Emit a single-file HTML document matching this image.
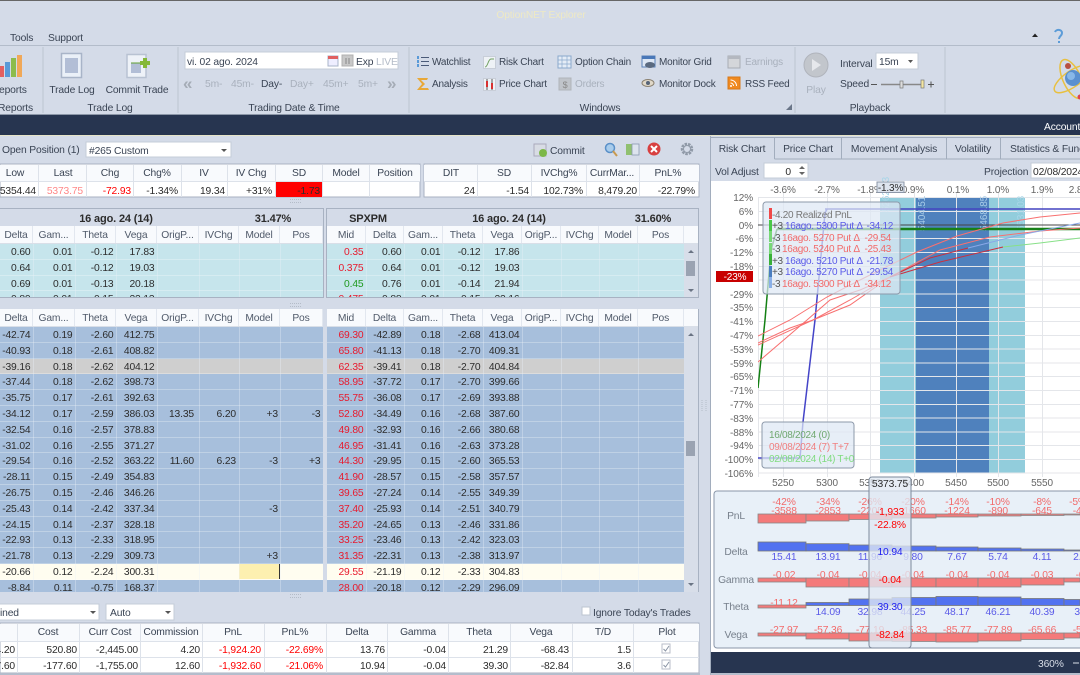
<!DOCTYPE html>
<html><head><meta charset="utf-8"><title>OptionNET Explorer</title>
<style>
html,body{margin:0;padding:0;width:1080px;height:675px;overflow:hidden;background:#d4dbe8}
body{position:relative;font:10.3px "Liberation Sans",sans-serif;letter-spacing:-.15px;color:#2c2c2c;filter:blur(.25px)}
.p{position:absolute;overflow:hidden}
.L .r{grid-template-columns:33px 42px 41px 41px 42px 40px 41px 43px}
.R .r{grid-template-columns:39px 38px 39px 40px 39px 39px 38px 39px 46px}
.r{display:grid;height:15.8px;box-sizing:border-box;border-bottom:1px solid rgba(255,255,255,.28);line-height:15px}
.r i{padding-top:1px;box-sizing:border-box}
.h{height:18px;background:#f8fafd;line-height:17px;border-bottom:1px solid #d9dfe8;color:#505a6a}
.h i{text-align:center;padding:1px 0 0;border-right:1px solid #e2e7ef}
i{font-style:normal;display:block;text-align:right;padding-right:2.5px;white-space:nowrap;overflow:hidden}
.a{background:#c6e5ec}.b{background:#a7bfdc}.g{background:#cfcfcf}.y{background:#fffdf0}
.s{color:#e8192c}.n{color:#1f9a1f}.o{background:#fdf0b0}
svg{position:absolute;left:0;top:0}
svg text{font:10.3px "Liberation Sans",sans-serif;letter-spacing:-.15px;fill:#3a4454}
.m{text-anchor:middle}.e{text-anchor:end}
.w{fill:#fff!important}.x{fill:#a9b1bd!important}.k{fill:#2c2c2c!important}
.d{fill:#f00!important}.q{fill:#ff8888!important}.u{fill:#5a5ae8!important}.t{fill:#f26a6a!important}
.ax text{fill:#666!important;font-size:10px!important;letter-spacing:-.1px}
.z text{font-size:10px;letter-spacing:-.2px}
.lg text{font-size:10px;letter-spacing:-.3px}
</style></head><body>

<!-- top grid left -->
<div class="p" style="left:0;top:208px;width:324px;height:90px;background:#d4dbe8;border-right:1px solid #a8b2c2;border-top:1px solid #a8b2c2;border-bottom:1px solid #a8b2c2;box-sizing:border-box"></div>
<div class="p L" style="left:0;top:226px;width:323px;height:71px">
<div class="r h"><i>Delta</i><i>Gam...</i><i>Theta</i><i>Vega</i><i>OrigP...</i><i>IVChg</i><i>Model</i><i>Pos</i></div>
<div class="r a"><i>0.60</i><i>0.01</i><i>-0.12</i><i>17.83</i></div>
<div class="r a"><i>0.64</i><i>0.01</i><i>-0.12</i><i>19.03</i></div>
<div class="r a"><i>0.69</i><i>0.01</i><i>-0.13</i><i>20.18</i></div>
<div class="r a"><i>0.80</i><i>0.01</i><i>-0.15</i><i>22.13</i></div>
</div>
<!-- top grid right -->
<div class="p" style="left:326px;top:208px;width:373px;height:90px;border:1px solid #a8b2c2;box-sizing:border-box;background:#d4dbe8"></div>
<div class="p R" style="left:327px;top:226px;width:371px;height:71px;background:#d8dee9">
<div class="r h"><i>Mid</i><i>Delta</i><i>Gam...</i><i>Theta</i><i>Vega</i><i>OrigP...</i><i>IVChg</i><i>Model</i><i>Pos</i></div>
<div style="width:357px">
<div class="r a"><i class="s">0.35</i><i>0.60</i><i>0.01</i><i>-0.12</i><i>17.86</i></div>
<div class="r a"><i class="s">0.375</i><i>0.64</i><i>0.01</i><i>-0.12</i><i>19.03</i></div>
<div class="r a"><i class="n">0.45</i><i>0.76</i><i>0.01</i><i>-0.14</i><i>21.94</i></div>
<div class="r a"><i class="s">0.475</i><i>0.88</i><i>0.01</i><i>-0.15</i><i>22.16</i></div>
</div></div>

<!-- main grid left -->
<div class="p L" style="left:0;top:309px;width:323px;height:283px;background:#a7bfdc">
<div class="r h"><i>Delta</i><i>Gam...</i><i>Theta</i><i>Vega</i><i>OrigP...</i><i>IVChg</i><i>Model</i><i>Pos</i></div>
<div class="r b"><i>-42.74</i><i>0.19</i><i>-2.60</i><i>412.75</i></div>
<div class="r b"><i>-40.93</i><i>0.18</i><i>-2.61</i><i>408.82</i></div>
<div class="r g"><i>-39.16</i><i>0.18</i><i>-2.62</i><i>404.12</i></div>
<div class="r b"><i>-37.44</i><i>0.18</i><i>-2.62</i><i>398.73</i></div>
<div class="r b"><i>-35.75</i><i>0.17</i><i>-2.61</i><i>392.63</i></div>
<div class="r b"><i>-34.12</i><i>0.17</i><i>-2.59</i><i>386.03</i><i style="padding-right:5px">13.35</i><i style="padding-right:3px">6.20</i><i style="padding-right:2px">+3</i><i>-3</i></div>
<div class="r b"><i>-32.54</i><i>0.16</i><i>-2.57</i><i>378.83</i></div>
<div class="r b"><i>-31.02</i><i>0.16</i><i>-2.55</i><i>371.27</i></div>
<div class="r b"><i>-29.54</i><i>0.16</i><i>-2.52</i><i>363.22</i><i style="padding-right:5px">11.60</i><i style="padding-right:3px">6.23</i><i style="padding-right:2px">-3</i><i>+3</i></div>
<div class="r b"><i>-28.11</i><i>0.15</i><i>-2.49</i><i>354.83</i></div>
<div class="r b"><i>-26.75</i><i>0.15</i><i>-2.46</i><i>346.26</i></div>
<div class="r b"><i>-25.43</i><i>0.14</i><i>-2.42</i><i>337.34</i><i></i><i></i><i style="padding-right:2px">-3</i></div>
<div class="r b"><i>-24.15</i><i>0.14</i><i>-2.37</i><i>328.18</i></div>
<div class="r b"><i>-22.93</i><i>0.13</i><i>-2.33</i><i>318.95</i></div>
<div class="r b"><i>-21.78</i><i>0.13</i><i>-2.29</i><i>309.73</i><i></i><i></i><i style="padding-right:2px">+3</i></div>
<div class="r y"><i>-20.66</i><i>0.12</i><i>-2.24</i><i>300.31</i><i></i><i></i><i class="o" style="border-right:1px solid #333">&nbsp;</i></div>
<div class="r b"><i>-8.84</i><i>0.11</i><i>-0.75</i><i>168.37</i></div>
</div>
<!-- main grid right -->
<div class="p R" style="left:327px;top:309px;width:371px;height:283px;background:#d8dee9">
<div class="r h"><i>Mid</i><i>Delta</i><i>Gam...</i><i>Theta</i><i>Vega</i><i>OrigP...</i><i>IVChg</i><i>Model</i><i>Pos</i></div>
<div style="width:357px">
<div class="r b"><i class="s">69.30</i><i>-42.89</i><i>0.18</i><i>-2.68</i><i>413.04</i></div>
<div class="r b"><i class="s">65.80</i><i>-41.13</i><i>0.18</i><i>-2.70</i><i>409.31</i></div>
<div class="r g"><i class="s">62.35</i><i>-39.41</i><i>0.18</i><i>-2.70</i><i>404.84</i></div>
<div class="r b"><i class="s">58.95</i><i>-37.72</i><i>0.17</i><i>-2.70</i><i>399.66</i></div>
<div class="r b"><i class="s">55.75</i><i>-36.08</i><i>0.17</i><i>-2.69</i><i>393.88</i></div>
<div class="r b"><i class="s">52.80</i><i>-34.49</i><i>0.16</i><i>-2.68</i><i>387.60</i></div>
<div class="r b"><i class="s">49.80</i><i>-32.93</i><i>0.16</i><i>-2.66</i><i>380.68</i></div>
<div class="r b"><i class="s">46.95</i><i>-31.41</i><i>0.16</i><i>-2.63</i><i>373.28</i></div>
<div class="r b"><i class="s">44.30</i><i>-29.95</i><i>0.15</i><i>-2.60</i><i>365.53</i></div>
<div class="r b"><i class="s">41.90</i><i>-28.57</i><i>0.15</i><i>-2.58</i><i>357.57</i></div>
<div class="r b"><i class="s">39.65</i><i>-27.24</i><i>0.14</i><i>-2.55</i><i>349.39</i></div>
<div class="r b"><i class="s">37.40</i><i>-25.93</i><i>0.14</i><i>-2.51</i><i>340.79</i></div>
<div class="r b"><i class="s">35.20</i><i>-24.65</i><i>0.13</i><i>-2.46</i><i>331.86</i></div>
<div class="r b"><i class="s">33.25</i><i>-23.46</i><i>0.13</i><i>-2.42</i><i>323.03</i></div>
<div class="r b"><i class="s">31.35</i><i>-22.31</i><i>0.13</i><i>-2.38</i><i>313.97</i></div>
<div class="r y"><i class="s">29.55</i><i>-21.19</i><i>0.12</i><i>-2.33</i><i>304.83</i></div>
<div class="r b"><i class="s">28.00</i><i>-20.18</i><i>0.12</i><i>-2.29</i><i>296.09</i></div>
</div></div>

<svg width="1080" height="675" viewBox="0 0 1080 675" xmlns="http://www.w3.org/2000/svg">
<defs><clipPath id="plot"><rect x="758" y="197" width="322" height="276"/></clipPath></defs>
<rect x="0" y="0" width="1080" height="1" fill="#666"/>

<!-- grid vertical lines -->
<g stroke="rgba(235,242,250,.35)" stroke-width="1">
<path d="M33.5 244V297M75.5 244V297M116.5 244V297M157.5 244V297M199.5 244V297M239.5 244V297M280.5 244V297"/>
<path d="M33.5 327V592M75.5 327V592M116.5 327V592M157.5 327V592M199.5 327V592M239.5 327V592M280.5 327V592"/>
<path d="M366.5 244V297M404.5 244V297M443.5 244V297M483.5 244V297M522.5 244V297M561.5 244V297M599.5 244V297M638.5 244V297"/>
<path d="M366.5 327V592M404.5 327V592M443.5 327V592M483.5 327V592M522.5 327V592M561.5 327V592M599.5 327V592M638.5 327V592"/>
</g>
<rect x="323" y="309" width="3" height="283" fill="#d4dbe8"/>
<rect x="698" y="309" width="1" height="283" fill="#a8b2c2"/>

<!-- title + menu -->
<text x="541" y="18" class="m" style="fill:#eee9c4">OptionNET Explorer</text>
<text x="10" y="41">Tools</text><text x="48" y="41">Support</text>
<path d="M1032 37l3-3.500 3 3.500z" fill="#222"/>
<path d="M1055 32c1-3 7-3 7 1 0 3-3 3-3 6M1059 41v2" fill="none" stroke="#5c9cd8" stroke-width="2"/>
<!-- ribbon -->
<rect x="0" y="45" width="1080" height="1" fill="#b3bcca"/>
<path d="M43 47V113M178 47V113M409 47V113M795 47V113M945 47V113" stroke="#bcc4d0"/>
<rect x="0" y="115" width="1080" height="20" fill="#273550"/>
<rect x="0" y="135" width="1080" height="1" fill="#e6e4c8"/>
<rect x="0" y="114" width="1080" height="1" fill="#8c97a8"/>

<!-- reports -->
<rect x="0" y="66" width="4" height="11" fill="#e46060"/><rect x="5" y="62" width="5" height="15" fill="#5a9ad8"/>
<rect x="11" y="58" width="5" height="19" fill="#8cbc4c"/><rect x="17" y="55" width="5" height="22" fill="#f0a858"/>
<text x="-1" y="93">eports</text><text x="-2" y="111">Reports</text>
<!-- trade log -->
<rect x="61.500" y="53.500" width="20" height="24" fill="#eaf0f8" stroke="#a8b4c8" stroke-width="1.500"/>
<rect x="65" y="58" width="13" height="15" fill="#b2bed6"/>
<text x="72" y="93" class="m">Trade Log</text>
<rect x="127" y="54.500" width="19" height="23" fill="#eef2f8" stroke="#b8c2d2" stroke-width="1.500"/>
<rect x="131" y="63" width="10" height="10" fill="#b2bed6"/><path d="M131 63H146" stroke="#60a030"/>
<path d="M145 58v10M140 63h10" stroke="#84b838" stroke-width="4"/>
<text x="137" y="93" class="m">Commit Trade</text>
<text x="110" y="111" class="m">Trade Log</text>
<!-- date -->
<rect x="185" y="52" width="213" height="17" fill="#fff" stroke="#c4ccd8"/>
<text x="187" y="65">vi. 02 ago. 2024</text>
<rect x="328" y="56" width="10" height="10" fill="#eef" stroke="#a8b4c8"/><rect x="328" y="56" width="10" height="3" fill="#e06060"/>
<rect x="342" y="55" width="11" height="11" fill="#c8c8c8" stroke="#b0b0b0"/><path d="M346 58v6M349 58v6" stroke="#888"/>
<text x="356" y="65">Exp</text><text x="376" y="65" style="fill:#b4bcc8">LIVE</text>
<text x="183" y="89" style="font-size:17px;font-weight:bold;fill:#a5acb6">«</text>
<text x="387" y="89" style="font-size:17px;font-weight:bold;fill:#a5acb6">»</text>
<text x="205" y="87" class="x">5m-</text><text x="231" y="87" class="x">45m-</text><text x="261" y="87">Day-</text><text x="290" y="87" class="x">Day+</text><text x="323" y="87" class="x">45m+</text><text x="358" y="87" class="x">5m+</text>
<text x="294" y="111" class="m">Trading Date &amp; Time</text>
<!-- windows icons -->
<g fill="none" stroke="#4a5a78"><path d="M421 57.500h8M421 61.500h8M421 65.500h8"/></g>
<path d="M417 56h2v3h-2zM417 60h2v3h-2zM417 64h2v3h-2z" fill="#5a9ad8"/>
<path d="M417 78h11l-1 2h-6l4 4-4 4h7l1 2h-12l5-6z" fill="#e8a838"/>
<rect x="483.500" y="56.500" width="12" height="12" fill="#eef2f6" stroke="#c8ced8"/><path d="M485 67c3 0 3-8 6-8h3" fill="none" stroke="#70a060"/>
<rect x="483.500" y="78.500" width="12" height="12" fill="#eef2f6" stroke="#c8ced8"/><path d="M487 79v11M492 79v11" stroke="#555"/><rect x="486" y="81" width="2" height="6" fill="#d83030"/><rect x="491" y="83" width="2" height="6" fill="#d83030"/>
<rect x="558" y="56" width="13" height="12" fill="#e4ecf6" stroke="#8aa8cc"/><path d="M558 60h13M558 64h13M562 56v12M567 56v12" stroke="#8aa8cc" stroke-width=".7"/>
<rect x="559" y="78" width="12" height="12" fill="#c0c4ca" stroke="#b0b4ba"/><text x="565" y="88" class="m" style="font-size:9px;fill:#888!important">$</text>
<rect x="642" y="56" width="13" height="11" fill="#dce6f4" stroke="#5a82b8"/><rect x="642" y="56" width="13" height="3" fill="#4a78b8"/>
<ellipse cx="650" cy="65" rx="5" ry="3" fill="#5a6a80"/>
<ellipse cx="648" cy="83" rx="6" ry="3.500" fill="#e0d8c8" stroke="#8a8070"/><circle cx="648" cy="83" r="2" fill="#566478"/>
<rect x="728" y="56" width="12" height="12" fill="#d4d6da" stroke="#a8acb4"/><rect x="728" y="56" width="12" height="3" fill="#b4b8c0"/>
<rect x="728" y="77" width="12" height="12" fill="#f08a20" stroke="#d87818"/><path d="M730.500 80a6 6 0 0 1 6 6M730.500 83a3 3 0 0 1 3 3" stroke="#fff" fill="none"/><circle cx="731" cy="86" r="1" fill="#fff"/>
<g class="z">
<text x="432" y="65">Watchlist</text><text x="499" y="65">Risk Chart</text><text x="575" y="65">Option Chain</text><text x="659" y="65">Monitor Grid</text><text x="745" y="65" class="x">Earnings</text>
<text x="432" y="87">Analysis</text><text x="499" y="87">Price Chart</text><text x="575" y="87" class="x">Orders</text><text x="659" y="87">Monitor Dock</text><text x="745" y="87">RSS Feed</text>
</g>
<text x="600" y="111" class="m">Windows</text>
<path d="M786 110h6v-6z" fill="#6a7688"/>
<!-- playback -->
<circle cx="816" cy="65" r="12" fill="#c2c6cc" stroke="#b0b4bc"/><path d="M812 59l9 6-9 6z" fill="#e6e8ec"/>
<text x="816" y="93" class="m x">Play</text>
<text x="840" y="67">Interval</text>
<rect x="876" y="53" width="42" height="16" fill="#fff" stroke="#c4ccd8"/><text x="879" y="65">15m</text><path d="M908 60h5l-2.500 3z" fill="#555"/>
<text x="840" y="87">Speed</text>
<path d="M871 84.500h6" stroke="#555"/><path d="M881 84.500h43" stroke="#888" stroke-width="1.500"/><rect x="900" y="81" width="3" height="7" fill="#ddd" stroke="#777" stroke-width=".7"/><rect x="921" y="80" width="3" height="8" fill="#f4e6a0" stroke="#777" stroke-width=".7"/><path d="M928 84.500h6M931 81.500v6" stroke="#555"/>
<text x="870" y="111" class="m">Playback</text>
<!-- atom -->
<ellipse cx="1072" cy="79" rx="9" ry="21" fill="none" stroke="#e8c040" stroke-width="1.500" transform="rotate(-25 1072 79)"/>
<ellipse cx="1072" cy="79" rx="21" ry="8" fill="none" stroke="#e8c040" stroke-width="1.500" transform="rotate(-35 1072 79)"/>
<circle cx="1073" cy="78" r="8" fill="#5a90d0"/><circle cx="1071" cy="76" r="4" fill="#88b8e8"/>
<circle cx="1068" cy="66" r="3" fill="#b85040"/><circle cx="1080" cy="97" r="2.500" fill="#e04050"/>
<text x="1044" y="130" class="w">Account</text>

<!-- open position row -->
<text x="2" y="153">Open Position (1)</text>
<rect x="86" y="142" width="145" height="15" fill="#fff" stroke="#c4ccd8"/><text x="89" y="154">#265 Custom</text><path d="M221 149h6l-3 3z" fill="#555"/>
<rect x="534" y="144" width="12" height="12" fill="#d8dce4" stroke="#aab"/><circle cx="543" cy="153" r="4" fill="#7cb848"/>
<text x="550" y="154">Commit</text>
<circle cx="610" cy="148" r="4.500" fill="#a8ccec" stroke="#5a90c8" stroke-width="1.500"/><path d="M613 151l4 5" stroke="#c89a50" stroke-width="2"/>
<rect x="626" y="144" width="6" height="11" fill="#90c070"/><rect x="632" y="144" width="7" height="11" fill="#dde4ee" stroke="#8a9ab0" stroke-width=".8"/>
<circle cx="654" cy="149" r="6.500" fill="#d84040"/><path d="M651 146l6 6M657 146l-6 6" stroke="#fff" stroke-width="2"/>
<circle cx="687" cy="149" r="5" fill="none" stroke="#909aa8" stroke-width="2.500" stroke-dasharray="2.500 1"/><circle cx="687" cy="149" r="3.500" fill="none" stroke="#909aa8"/>

<!-- info tables -->
<rect x="0" y="164" width="420" height="33" fill="#fff" stroke="#a8b2c2"/>
<rect x="424" y="164" width="275" height="33" fill="#fff" stroke="#a8b2c2"/>
<rect x="0" y="165" width="420" height="16" fill="#f8fafd"/><rect x="424" y="165" width="275" height="16" fill="#f8fafd"/>
<rect x="275" y="182" width="47" height="15" fill="#f00"/>
<path d="M38.500 165V197M86.500 165V197M133.500 165V197M181.500 165V197M227.500 165V197M275.500 165V197M322.500 165V197M369.500 165V197M477.500 165V197M531.500 165V197M586.500 165V197M639.500 165V197M0 181.500H420M424 181.500H699" stroke="#dde2ea"/>
<text x="15" y="176" class="m">Low</text><text x="63" y="176" class="m">Last</text><text x="110" y="176" class="m">Chg</text><text x="157" y="176" class="m">Chg%</text><text x="204" y="176" class="m">IV</text><text x="251" y="176" class="m">IV Chg</text><text x="299" y="176" class="m">SD</text><text x="346" y="176" class="m">Model</text><text x="395" y="176" class="m">Position</text>
<text x="451" y="176" class="m">DIT</text><text x="504" y="176" class="m">SD</text><text x="559" y="176" class="m">IVChg%</text><text x="612" y="176" class="m">CurrMar...</text><text x="668" y="176" class="m">PnL%</text>
<text x="36" y="194" class="e k">5354.44</text><text x="83" y="194" class="e q">5373.75</text><text x="131" y="194" class="e d">-72.93</text><text x="178" y="194" class="e k">-1.34%</text><text x="225" y="194" class="e k">19.34</text><text x="272" y="194" class="e k">+31%</text><text x="320" y="194" class="e k">-1.73</text>
<text x="475" y="194" class="e k">24</text><text x="529" y="194" class="e k">-1.54</text><text x="583" y="194" class="e k">102.73%</text><text x="637" y="194" class="e k">8,479.20</text><text x="695" y="194" class="e k">-22.79%</text>

<!-- grid titles -->
<text x="116" y="222" class="m k" style="font-weight:bold;font-size:11px">16 ago. 24 (14)</text><text x="273" y="222" class="m k" style="font-weight:bold;font-size:11px">31.47%</text>
<text x="368" y="222" class="m k" style="font-weight:bold;font-size:11px">SPXPM</text><text x="509" y="222" class="m k" style="font-weight:bold;font-size:11px">16 ago. 24 (14)</text><text x="653" y="222" class="m k" style="font-weight:bold;font-size:11px">31.60%</text>
<!-- scrollbars -->
<rect x="686" y="261" width="9" height="15" fill="#9aa3b2"/><path d="M688 253h6l-3-3zM688 289h6l-3 3z" fill="#6a7484"/>
<rect x="686" y="441" width="9" height="15" fill="#9aa3b2"/><path d="M688 336h6l-3-3zM688 583h6l-3 3z" fill="#6a7484"/>
<!-- splitters -->
<g stroke="#b4bcc8" stroke-dasharray="1 1"><path d="M290 202.500h12M290 303.500h12M290 597.500h12M290 199.500h12M290 306.500h12M290 594.500h12"/><path d="M702 400v12M706 400v12"/></g>

<!-- bottom controls -->
<rect x="-2" y="604" width="101" height="16" fill="#fff" stroke="#c4ccd8"/><text x="0" y="616">ined</text><path d="M90 611h6l-3 3z" fill="#555"/>
<rect x="106" y="604" width="68" height="16" fill="#fff" stroke="#c4ccd8"/><text x="110" y="616">Auto</text><path d="M165 611h6l-3 3z" fill="#555"/>
<rect x="582" y="607" width="8" height="8" fill="#fff" stroke="#bcc4d0"/><text x="593" y="616">Ignore Today's Trades</text>
<!-- position table -->
<rect x="0" y="623" width="699" height="50" fill="#fff" stroke="#a8b2c2"/><rect x="0" y="624" width="699" height="17" fill="#f8fafd"/>
<path d="M17.500 624V673M79.500 624V673M140.500 624V673M202.500 624V673M264.500 624V673M326.500 624V673M387.500 624V673M448.500 624V673M510.500 624V673M572.500 624V673M633.500 624V673M0 641.500H699M0 657.500H699" stroke="#dde2ea"/>
<text x="48" y="635" class="m">Cost</text><text x="110" y="635" class="m">Curr Cost</text><text x="171" y="635" class="m">Commission</text><text x="233" y="635" class="m">PnL</text><text x="295" y="635" class="m">PnL%</text><text x="357" y="635" class="m">Delta</text><text x="418" y="635" class="m">Gamma</text><text x="479" y="635" class="m">Theta</text><text x="541" y="635" class="m">Vega</text><text x="603" y="635" class="m">T/D</text><text x="667" y="635" class="m">Plot</text>
<text x="15" y="653" class="e k">4.20</text><text x="77" y="653" class="e k">520.80</text><text x="138" y="653" class="e k">-2,445.00</text><text x="200" y="653" class="e k">4.20</text><text x="261" y="653" class="e d">-1,924.20</text><text x="323" y="653" class="e d">-22.69%</text><text x="385" y="653" class="e k">13.76</text><text x="446" y="653" class="e k">-0.04</text><text x="508" y="653" class="e k">21.29</text><text x="569" y="653" class="e k">-68.43</text><text x="631" y="653" class="e k">1.5</text>
<text x="15" y="669" class="e k">7.60</text><text x="77" y="669" class="e k">-177.60</text><text x="138" y="669" class="e k">-1,755.00</text><text x="200" y="669" class="e k">12.60</text><text x="261" y="669" class="e d">-1,932.60</text><text x="323" y="669" class="e d">-21.06%</text><text x="385" y="669" class="e k">10.94</text><text x="446" y="669" class="e k">-0.04</text><text x="508" y="669" class="e k">39.30</text><text x="569" y="669" class="e k">-82.84</text><text x="631" y="669" class="e k">3.6</text>
<g fill="#fff" stroke="#b8bec8"><rect x="662" y="644" width="8" height="9"/><rect x="662" y="660" width="8" height="9"/></g>
<path d="M663.500 649l2 2 3.500-5M663.500 665l2 2 3.500-5" fill="none" stroke="#8a94a4"/>
<rect x="0" y="673" width="700" height="2" fill="#b4bdcc"/>

<!-- right tabs -->
<path d="M710.500 159V137.500H774.500V159M841.500 159V137.500M946.500 159V137.500M1000.500 159V137.500H1080M774.500 137.500H1000M710.500 136V675" fill="none" stroke="#a2adbd"/>
<path d="M774.500 159H1080" stroke="#a2adbd"/>
<text x="742" y="152" class="m">Risk Chart</text><text x="808" y="152" class="m">Price Chart</text><text x="894" y="152" class="m">Movement Analysis</text><text x="973" y="152" class="m">Volatility</text><text x="1010" y="152">Statistics &amp; Func</text>
<text x="715" y="175">Vol Adjust</text>
<rect x="764" y="163" width="44" height="15" fill="#fff" stroke="#c4ccd8"/><text x="791" y="175" class="e k">0</text><path d="M799 169h6l-3-3zM799 172h6l-3 3z" fill="#666"/>
<text x="984" y="175">Projection</text>
<rect x="1031" y="163" width="60" height="15" fill="#fff" stroke="#c4ccd8"/><text x="1033" y="175" class="k">02/08/2024</text>

<!-- chart -->
<rect x="711" y="181" width="369" height="471" fill="#fff"/>
<rect x="880" y="197" width="145" height="276" fill="#92cddc"/>
<rect x="916" y="197" width="73" height="276" fill="#4f81bd"/>
<g stroke="#e4e6ea" stroke-width="1">
<path d="M758 197.500H1080M758 211.500H1080M758 225H1080M758 238.500H1080M758 252.500H1080M758 266.500H1080M758 280H1080M758 294H1080M758 307.500H1080M758 321.500H1080M758 335.500H1080M758 349H1080M758 363H1080M758 376.500H1080M758 390.500H1080M758 404.500H1080M758 418H1080M758 432H1080M758 445.500H1080M758 459.500H1080M758 473H1080"/>
<path d="M758.500 197V477M783.500 192V477M827.500 192V477M870.500 192V477M914.500 192V477M956.500 192V477M998.500 192V477M1042.500 192V477"/>
</g>
<text transform="translate(889 212) rotate(-90)" style="font-size:10px;fill:#a8d6e8">5262.33</text>
<text transform="translate(925 231) rotate(-90)" style="font-size:10px;fill:#a8cce8">5404.51</text>
<text transform="translate(987 231) rotate(-90)" style="font-size:10px;fill:#a8cce8">5468.85</text>
<text transform="translate(1024 231) rotate(-90)" style="font-size:10px;fill:#a8d6e8">5531.03</text>
<g clip-path="url(#plot)" fill="none">
<path d="M758 225H1080" stroke="#444"/>
<path d="M777 229H1080" stroke="#188018" stroke-width="2.500"/>
<path d="M825 209H1080" stroke="#4444c0" stroke-width="1.500"/>
<path d="M758 388L765 320L771 250L777 229" stroke="#148014" stroke-width="1.500"/>
<path d="M758 458H800L803 422L815 320L825 213L827 209" stroke="#4444c8" stroke-width="1.500"/>
<g stroke="#f87070" stroke-width="1">
<path d="M758 336L790 320L827 297L860 280L890 265L917 252L957 236L1003 223L1040 217L1080 213"/>
<path d="M758 343L790 328L813 320L850 300L890 277"/>
<path d="M758 345L813 320L850 305L890 277"/>
<path d="M758 362L807 320L830 300L860 290L890 277"/>
<path d="M890 277L940 250L990 237L1040 231L1080 228"/>
</g>
<path d="M890 277L930 258L968 248" stroke="#c83040" stroke-width="1"/>
<path d="M890 277L940 262L1003 247" stroke="#c83040" stroke-width="1"/>
<path d="M968 248L1020 235L1080 223" stroke="#8aa8e8" stroke-width="1"/>
<path d="M1003 247L1040 243L1080 238" stroke="#88e088" stroke-width="1"/>
</g>
<!-- labels -->
<g class="ax">
<text x="753" y="201" class="e">12%</text><text x="753" y="215" class="e">6%</text><text x="753" y="229" class="e">0%</text><text x="753" y="242" class="e">-6%</text><text x="753" y="256" class="e">-12%</text><text x="753" y="270" class="e">-18%</text><text x="753" y="298" class="e">-29%</text><text x="753" y="311" class="e">-35%</text><text x="753" y="325" class="e">-41%</text><text x="753" y="339" class="e">-47%</text><text x="753" y="353" class="e">-53%</text><text x="753" y="367" class="e">-59%</text><text x="753" y="380" class="e">-65%</text><text x="753" y="394" class="e">-71%</text><text x="753" y="408" class="e">-77%</text><text x="753" y="422" class="e">-83%</text><text x="753" y="436" class="e">-88%</text><text x="753" y="449" class="e">-94%</text><text x="753" y="463" class="e">-100%</text><text x="753" y="477" class="e">-106%</text>
<text x="783" y="193" class="m">-3.6%</text><text x="827" y="193" class="m">-2.7%</text><text x="870" y="193" class="m">-1.8%</text><text x="913" y="193" class="m">0.9%</text><text x="958" y="193" class="m">0.1%</text><text x="998" y="193" class="m">1.0%</text><text x="1042" y="193" class="m">1.9%</text><text x="1080" y="193" class="m">2.8%</text>
<text x="783" y="486" class="m">5250</text><text x="827" y="486" class="m">5300</text><text x="870" y="486" class="m">5350</text><text x="913" y="486" class="m">5400</text><text x="956" y="486" class="m">5450</text><text x="998" y="486" class="m">5500</text><text x="1042" y="486" class="m">5550</text>
</g>
<rect x="716" y="271" width="37" height="11" fill="#c80000"/><text x="735" y="280" class="m w" style="font-size:10px">-23%</text>
<rect x="877" y="182" width="27" height="10.500" fill="#dde4ee" stroke="#8c97a8"/><text x="890.500" y="191" class="m k" style="font-size:10px">-1.3%</text>

<!-- legends -->
<rect x="763" y="202" width="137" height="92" rx="3" fill="rgba(222,232,244,.72)" stroke="#8d99aa"/>
<rect x="769" y="208" width="3" height="11" fill="#f04848"/><rect x="769" y="220" width="3" height="11" fill="#48c848"/><rect x="769" y="231" width="3" height="11" fill="#78d878"/><rect x="769" y="243" width="3" height="11" fill="#78d878"/><rect x="769" y="254" width="3" height="11" fill="#38b038"/><rect x="769" y="266" width="3" height="11" fill="#4a7ec0"/><rect x="769" y="277" width="3" height="11" fill="#8ab0e8"/>
<g class="lg">
<text x="772" y="218" style="fill:#777">-4.20 Realized PnL</text>
<text x="772" y="229" style="fill:#555">+3</text><text x="785" y="229" class="u">16ago. 5300 Put Δ</text><text x="893" y="229" class="e u">-34.12</text>
<text x="772" y="241" style="fill:#555">-3</text><text x="782" y="241" class="t">16ago. 5270 Put Δ</text><text x="891" y="241" class="e t">-29.54</text>
<text x="772" y="252" style="fill:#555">-3</text><text x="782" y="252" class="t">16ago. 5240 Put Δ</text><text x="891" y="252" class="e t">-25.43</text>
<text x="772" y="264" style="fill:#555">+3</text><text x="785" y="264" class="u">16ago. 5210 Put Δ</text><text x="893" y="264" class="e u">-21.78</text>
<text x="772" y="275" style="fill:#555">+3</text><text x="785" y="275" class="u">16ago. 5270 Put Δ</text><text x="893" y="275" class="e u">-29.54</text>
<text x="772" y="287" style="fill:#555">-3</text><text x="782" y="287" class="t">16ago. 5300 Put Δ</text><text x="891" y="287" class="e t">-34.12</text>
</g>
<rect x="762" y="422" width="92" height="46" rx="3" fill="rgba(222,232,244,.72)" stroke="#8d99aa"/>
<g class="lg">
<text x="769" y="438" style="fill:#70a870">16/08/2024 (0)</text>
<text x="769" y="450" style="fill:#f08080">09/08/2024 (7) T+7</text>
<text x="769" y="462" style="fill:#80dc80">02/08/2024 (14) T+0</text>
</g>

<!-- bottom bar panel -->
<rect x="714" y="491" width="380" height="157" rx="3" fill="#e8f0f8" stroke="#8a96a8"/>
<g fill="#f47a7a" stroke="#888" stroke-width=".8">
<rect x="758" y="514" width="48" height="9"/><rect x="806" y="514" width="43" height="7"/><rect x="849" y="514" width="43" height="5.500"/><rect x="892" y="514" width="44" height="4"/><rect x="936" y="514" width="42" height="3"/><rect x="978" y="514" width="43" height="2"/><rect x="1021" y="514" width="43" height="1.500"/><rect x="1064" y="514" width="16" height="1"/>
<rect x="758" y="578" width="48" height="4"/><rect x="806" y="578" width="43" height="9"/><rect x="849" y="578" width="43" height="9"/><rect x="892" y="578" width="44" height="9"/><rect x="936" y="578" width="42" height="9"/><rect x="978" y="578" width="43" height="9"/><rect x="1021" y="578" width="43" height="7"/><rect x="1064" y="578" width="16" height="4"/>
<rect x="758" y="605" width="48" height="3"/>
<rect x="758" y="633" width="48" height="3"/><rect x="806" y="633" width="43" height="6"/><rect x="849" y="633" width="43" height="8"/><rect x="892" y="633" width="44" height="8.500"/><rect x="936" y="633" width="42" height="9"/><rect x="978" y="633" width="43" height="8"/><rect x="1021" y="633" width="43" height="6.500"/><rect x="1064" y="633" width="16" height="5"/>
</g>
<g fill="#5272f0" stroke="#777" stroke-width=".8">
<rect x="758" y="542" width="48" height="9"/><rect x="806" y="543.700" width="43" height="7.300"/><rect x="849" y="545" width="43" height="6"/><rect x="892" y="546" width="44" height="5"/><rect x="936" y="547" width="42" height="4"/><rect x="978" y="548" width="43" height="3"/><rect x="1021" y="549" width="43" height="2"/><rect x="1064" y="550" width="16" height="1"/>
<rect x="806" y="602.500" width="43" height="3"/><rect x="849" y="599" width="43" height="6.500"/><rect x="892" y="597.500" width="44" height="8"/><rect x="936" y="596.500" width="42" height="9"/><rect x="978" y="597" width="43" height="8.500"/><rect x="1021" y="598.500" width="43" height="7"/><rect x="1064" y="599.500" width="16" height="6"/>
</g>
<text x="736" y="519" class="m" style="fill:#77808c">PnL</text><text x="736" y="555" class="m" style="fill:#77808c">Delta</text><text x="736" y="583" class="m" style="fill:#77808c">Gamma</text><text x="736" y="610" class="m" style="fill:#77808c">Theta</text><text x="736" y="638" class="m" style="fill:#77808c">Vega</text>
<text x="784" y="505" class="m t">-42%</text><text x="828" y="505" class="m t">-34%</text><text x="870" y="505" class="m t">-26%</text><text x="913" y="505" class="m t">-20%</text><text x="957" y="505" class="m t">-14%</text><text x="998" y="505" class="m t">-10%</text><text x="1042" y="505" class="m t">-8%</text><text x="1078" y="505" class="m t">-5%</text>
<text x="784" y="514" class="m t">-3588</text><text x="828" y="514" class="m t">-2853</text><text x="870" y="514" class="m t">-2205</text><text x="913" y="514" class="m t">-1660</text><text x="957" y="514" class="m t">-1224</text><text x="998" y="514" class="m t">-890</text><text x="1042" y="514" class="m t">-645</text><text x="1080" y="514" class="m t">-45</text>
<text x="784" y="560" class="m u">15.41</text><text x="828" y="560" class="m u">13.91</text><text x="870" y="560" class="m u">11.96</text><text x="913" y="560" class="m u">9.80</text><text x="957" y="560" class="m u">7.67</text><text x="998" y="560" class="m u">5.74</text><text x="1042" y="560" class="m u">4.11</text><text x="1080" y="560" class="m u">2.9</text>
<text x="784" y="578" class="m t">-0.02</text><text x="828" y="578" class="m t">-0.04</text><text x="870" y="578" class="m t">-0.04</text><text x="913" y="578" class="m t">-0.04</text><text x="957" y="578" class="m t">-0.04</text><text x="998" y="578" class="m t">-0.04</text><text x="1042" y="578" class="m t">-0.03</text><text x="1080" y="578" class="m t">-0</text>
<text x="784" y="606" class="m t">-11.12</text><text x="828" y="615" class="m u">14.09</text><text x="870" y="615" class="m u">32.98</text><text x="913" y="615" class="m u">44.25</text><text x="957" y="615" class="m u">48.17</text><text x="998" y="615" class="m u">46.21</text><text x="1042" y="615" class="m u">40.39</text><text x="1080" y="615" class="m u">33</text>
<text x="784" y="633" class="m t">-27.97</text><text x="828" y="633" class="m t">-57.36</text><text x="870" y="633" class="m t">-77.19</text><text x="913" y="633" class="m t">-85.33</text><text x="957" y="633" class="m t">-85.77</text><text x="998" y="633" class="m t">-77.89</text><text x="1042" y="633" class="m t">-65.66</text><text x="1080" y="633" class="m t">-52</text>
<!-- center box -->
<rect x="869" y="477" width="42" height="171" rx="3" fill="rgba(224,232,242,.78)" stroke="#7d8a9c"/>
<text x="890" y="487" class="m k">5373.75</text>
<text x="890" y="515" class="m d">-1,933</text><text x="890" y="528" class="m d">-22.8%</text><text x="890" y="555" class="m" style="fill:#2020f0">10.94</text><text x="890" y="583" class="m d">-0.04</text><text x="890" y="610" class="m" style="fill:#2020f0">39.30</text><text x="890" y="638" class="m d">-82.84</text>
<!-- status band -->
<rect x="711" y="652" width="369" height="21" fill="#273550"/>
<rect x="711" y="673" width="369" height="2" fill="#b4bdcc"/>
<text x="1038" y="667" style="fill:#d8dee8">360%</text><path d="M1073 663h6" stroke="#d8dee8"/>
</svg>
</body></html>
